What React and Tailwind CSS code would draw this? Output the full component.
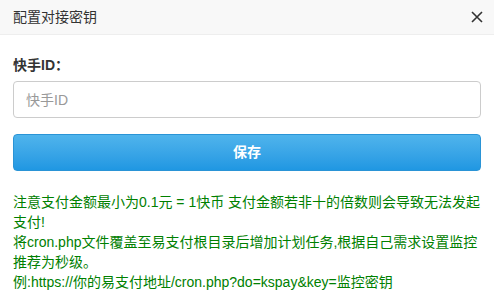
export default function App() {
  return (
    <div className="w-[494px] h-[304px] bg-white overflow-hidden" style={{ fontFamily: '"Liberation Sans", "Noto Sans CJK SC", sans-serif' }}>
      {/* 标题栏 */}
      <div className="h-[35px] bg-[#f8f8f8] border-b border-[#eeeeee] flex items-center justify-between pl-[13px] pr-[11px]">
        <span className="text-[14px] text-[#333333]">配置对接密钥</span>
        <svg width="12" height="12" viewBox="0 0 12 12" className="text-[#333]">
          <path d="M1 1L11 11M11 1L1 11" stroke="currentColor" strokeWidth="1.6" />
        </svg>
      </div>

      {/* 表单 */}
      <div className="px-[13px] pt-[20px]">
        <label className="block text-[14px] font-bold text-[#333333] leading-[20px]">快手ID：</label>
        <input
          className="mt-[6px] w-full h-[37px] border border-[#cccccc] rounded-[4px] px-[12px] text-[14px] placeholder-[#999999] outline-none"
          placeholder="快手ID"
        />
        <button className="mt-[16px] w-full h-[37px] rounded-[4px] text-white text-[14px] font-bold bg-gradient-to-b from-[#4fb4ec] to-[#1f97e2] border border-[#2a94d6]">
          保存
        </button>
        <div className="mt-[21px] text-[14px] leading-[20px] text-[#008000]">
          注意支付金额最小为0.1元 = 1快币 支付金额若非十的倍数则会导致无法发起支付!
          <br />
          将cron.php文件覆盖至易支付根目录后增加计划任务,根据自己需求设置监控推荐为秒级。
          <br />
          例:https://你的易支付地址/cron.php?do=kspay&amp;key=监控密钥
        </div>
      </div>
    </div>
  );
}
